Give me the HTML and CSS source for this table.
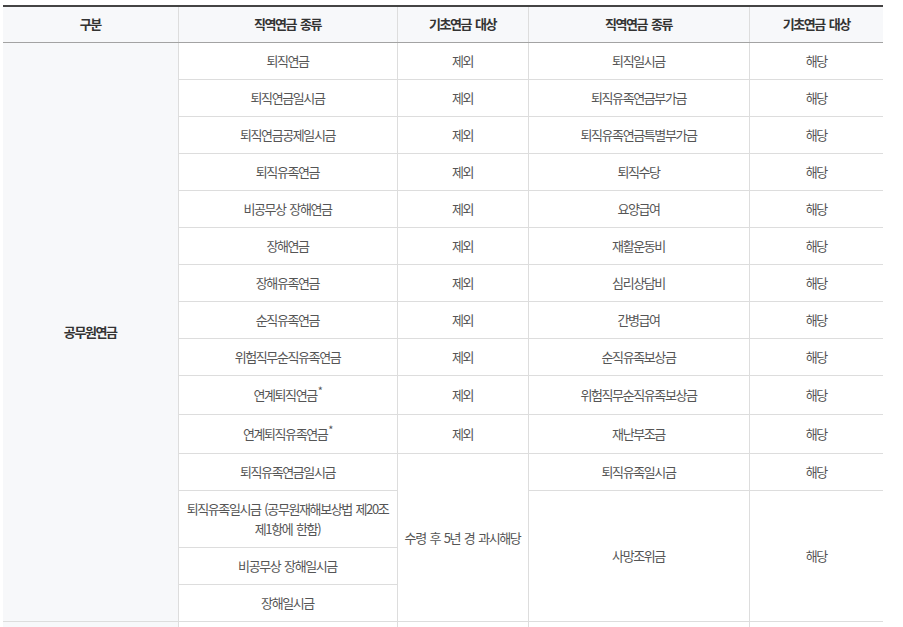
FILE: index.html
```html
<!DOCTYPE html>
<html lang="ko">
<head>
<meta charset="utf-8">
<title>직역연금 기초연금 대상</title>
<link rel="stylesheet" href="styles.css">
</head>
<body>
<div class="wrap">
<table class="pension">
  <colgroup>
    <col class="c-group">
    <col class="c-kind">
    <col class="c-target">
    <col class="c-kind2">
    <col class="c-target2">
  </colgroup>
  <thead>
    <tr>
      <th>구분</th>
      <th>직역연금 종류</th>
      <th>기초연금 대상</th>
      <th>직역연금 종류</th>
      <th>기초연금 대상</th>
    </tr>
  </thead>
  <tbody>
    <tr>
      <th class="group" rowspan="15">공무원연금</th>
      <td>퇴직연금</td><td>제외</td><td>퇴직일시금</td><td>해당</td>
    </tr>
    <tr><td>퇴직연금일시금</td><td>제외</td><td>퇴직유족연금부가금</td><td>해당</td></tr>
    <tr><td>퇴직연금공제일시금</td><td>제외</td><td>퇴직유족연금특별부가금</td><td>해당</td></tr>
    <tr><td>퇴직유족연금</td><td>제외</td><td>퇴직수당</td><td>해당</td></tr>
    <tr><td>비공무상 장해연금</td><td>제외</td><td>요양급여</td><td>해당</td></tr>
    <tr><td>장해연금</td><td>제외</td><td>재활운동비</td><td>해당</td></tr>
    <tr><td>장해유족연금</td><td>제외</td><td>심리상담비</td><td>해당</td></tr>
    <tr><td>순직유족연금</td><td>제외</td><td>간병급여</td><td>해당</td></tr>
    <tr><td>위험직무순직유족연금</td><td>제외</td><td>순직유족보상금</td><td>해당</td></tr>
    <tr class="noted"><td>연계퇴직연금<sup>*</sup></td><td>제외</td><td>위험직무순직유족보상금</td><td>해당</td></tr>
    <tr class="noted"><td>연계퇴직유족연금<sup>*</sup></td><td>제외</td><td>재난부조금</td><td>해당</td></tr>
    <tr>
      <td>퇴직유족연금일시금</td>
      <td rowspan="4" class="nowrap">수령 후 5년 경 과시해당</td>
      <td>퇴직유족일시금</td><td>해당</td>
    </tr>
    <tr>
      <td class="nowrap">퇴직유족일시금 (공무원재해보상법 제20조<br>제1항에 한함)</td>
      <td rowspan="3">사망조위금</td>
      <td rowspan="3">해당</td>
    </tr>
    <tr><td>비공무상 장해일시금</td></tr>
    <tr><td>장해일시금</td></tr>
    <tr>
      <th class="group">사립학교교직원연금</th>
      <td>퇴직연금</td><td>제외</td><td>퇴직일시금</td><td>해당</td>
    </tr>
  </tbody>
</table>
</div>
</body>
</html>
```

FILE: styles.css
```css
html, body {
  margin: 0;
  padding: 0;
  background: #fff;
}

.wrap {
  padding: 5px 0 0 3px;
}

.pension {
  width: 880px;
  border-collapse: collapse;
  table-layout: fixed;
  border-top: 2px solid #444;
  font-family: "Noto Sans CJK KR", "Noto Sans", sans-serif;
  font-size: 13px;
  letter-spacing: -1.4px;
  word-spacing: 1.5px;
  color: #555;
}

.c-group { width: 175px; }
.c-kind { width: 219px; }
.c-target { width: 131px; }
.c-kind2 { width: 221px; }
.c-target2 { width: 134px; }

.pension th,
.pension td {
  border: 1px solid #ddd;
  padding: 8px 4px;
  line-height: 20px;
  text-align: center;
  vertical-align: middle;
  font-weight: 400;
}

.pension tr > :first-child { border-left: 0; }
.pension tr > :last-child { border-right: 0; }

.pension .nowrap { white-space: nowrap; }

.pension tr.noted td {
  padding-top: 9px;
  padding-bottom: 9px;
}

.pension thead th {
  background: #f7f8fa;
  color: #333;
  font-weight: 700;
  padding: 7px 4px 8px;
  border-top: 0;
  border-bottom: 1px solid #a3a3a3;
}

.pension th.group {
  background: #f7f8fa;
  color: #333;
  font-weight: 700;
  border-left: 0;
}

.pension sup {
  font-size: 11px;
  line-height: 0;
  vertical-align: 5px;
  margin-left: 1px;
}
```
